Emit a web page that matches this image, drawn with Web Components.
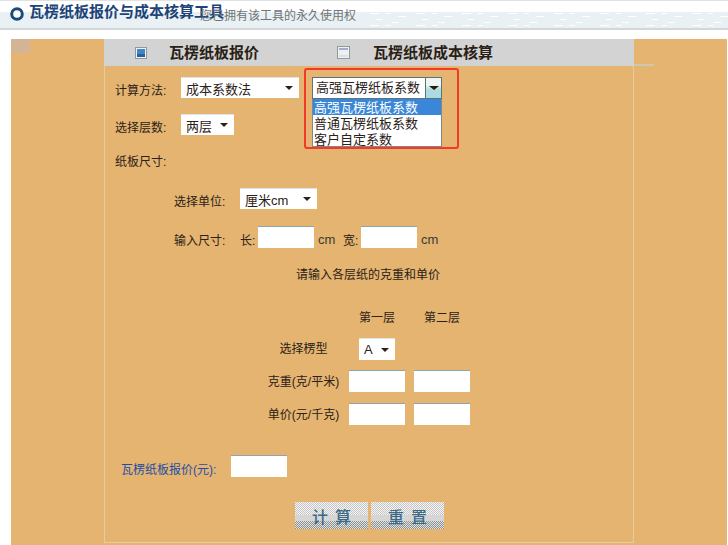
<!DOCTYPE html>
<html lang="zh">
<head>
<meta charset="utf-8">
<title>瓦楞纸板报价与成本核算工具</title>
<style>
  html, body { margin: 0; background: #fff; }
  body { font: 13px "Liberation Sans", "Noto Sans CJK SC", sans-serif; color: #2b2118; }
</style>
</head>
<body>
<tool-page>
  <tool-header slot="header" note="您已拥有该工具的永久使用权">瓦楞纸板报价与成本核算工具</tool-header>
  <quote-panel></quote-panel>
</tool-page>

<script>
customElements.define("tool-page", class extends HTMLElement {
  constructor() {
    super();
    this.attachShadow({ mode: 'open' }).innerHTML = `
      <style>
        :host { display: block; width: 728px; height: 545px; overflow: hidden; }
        .main {
          height: 506px;
          margin: 9px 1px 0 11px;
          padding-left: 93px;
          /* washed out corner and stray stripe of the old background picture */
          background:
            linear-gradient(#d3b595, #d3b595) 0 0 / 19px 14px no-repeat,
            linear-gradient(#cfc6b0, #cfc6b0) 623px 25px / 20px 2px no-repeat,
            #e4b470;
        }
      </style>
      <slot name="header"></slot>
      <div class="main"><slot></slot></div>
    `;
  }
});

customElements.define("tool-header", class extends HTMLElement {
  constructor() {
    super();
    this.attachShadow({ mode: 'open' }).innerHTML = `
      <style>
        :host {
          display: block;
          position: relative;
          box-sizing: border-box;
          height: 30px;
          border-top: 1px solid #dfe3e4;
          border-bottom: 2px solid #d3d7d9;
          background: linear-gradient(#fff 0 11px, #e9f1f4 11px);
        }
        .specks { position: absolute; left: 0; top: 11px; }
        .row { position: relative; display: flex; align-items: flex-start; padding: 6px 0 0 10px; }
        svg.dot { flex: none; }
        h1 {
          flex: none;
          width: 171px;
          margin: -5px 0 0 5px;
          font: bold 15px/20px "Liberation Serif", "Noto Sans CJK SC", serif;
          color: #1d4478;
          white-space: nowrap;
        }
        .note { margin-top: 1px; font-size: 12px; line-height: 16px; color: #6f7476; white-space: nowrap; }
      </style>
      <svg class="specks" width="728" height="16">
        <defs>
          <pattern id="dash" width="46" height="12" patternUnits="userSpaceOnUse">
            <rect x="2" y="1" width="9" height="1" fill="#fff"/>
            <rect x="18" y="1" width="5" height="1" fill="#fff"/>
            <rect x="30" y="4" width="8" height="1" fill="#fff"/>
            <rect x="8" y="7" width="6" height="1" fill="#fff"/>
            <rect x="24" y="10" width="7" height="1" fill="#fff"/>
          </pattern>
        </defs>
        <rect x="360" width="368" height="14" fill="url(#dash)"/>
      </svg>
      <div class="row">
        <svg class="dot" width="14" height="14" viewBox="0 0 14 14"><circle cx="7" cy="7" r="5.3" fill="#fff" stroke="#1c4a7c" stroke-width="3"/></svg>
        <h1><slot></slot></h1>
        <span class="note">${this.getAttribute('note')}</span>
      </div>
    `;
  }
});

customElements.define("tab-item", class extends HTMLElement {
  constructor() {
    super();
    const on = this.hasAttribute('active');
    this.attachShadow({ mode: 'open' }).innerHTML = `
      <style>
        :host { display: flex; align-items: center; gap: 22px; }
        .box {
          box-sizing: border-box;
          width: ${on ? 12 : 13}px; height: ${on ? 12 : 13}px;
          margin: 0 ${on ? 0 : 1}px 0 0;
          border: 1px solid #8d9b9c;
          box-shadow: inset 0 0 0 1px #eef2f2;
          background: ${on ? 'linear-gradient(#3f86c9 60%, #2a5f98 60%)' : 'linear-gradient(#a9a9cf 0 3px, #eef0f0 3px 8px, #dde1e1 8px)'};
        }
        .label {
          font: bold 15px/20px "Liberation Serif", "Noto Sans CJK SC", serif;
          color: #2a1f16;
          white-space: nowrap;
        }
      </style>
      <span class="box"></span>
      <span class="label"><slot></slot></span>
    `;
  }
});

customElements.define("fake-select", class extends HTMLElement {
  constructor() {
    super();
    this.attachShadow({ mode: 'open' }).innerHTML = `
      <style>
        :host {
          display: flex;
          align-items: center;
          justify-content: space-between;
          box-sizing: border-box;
          height: 21px;
          padding: 0 6px 0 5px;
          background: #fff;
          border-top: 1px solid #dfe3e4;
          white-space: nowrap;
          font-size: 13px;
          color: #2b2118;
        }
        i {
          width: 0; height: 0;
          border: 4px solid transparent;
          border-top: 4px solid #2b2118;
          border-bottom: 0;
          margin-left: 6px;
        }
      </style>
      <span><slot></slot></span><i></i>
    `;
  }
});

customElements.define("text-box", class extends HTMLElement {
  constructor() {
    super();
    this.attachShadow({ mode: 'open' }).innerHTML = `
      <style>
        :host {
          display: block;
          box-sizing: border-box;
          width: 56px; height: 22px;
          background: #fff;
          border-top: 1px solid #8fa5ab;
        }
      </style>
    `;
  }
});

customElements.define("action-button", class extends HTMLElement {
  constructor() {
    super();
    this.attachShadow({ mode: 'open' }).innerHTML = `
      <style>
        :host {
          display: flex;
          align-items: center;
          justify-content: center;
          box-sizing: border-box;
          width: 73px; height: 27px;
          padding-left: 7px;
          font: 500 16px "Noto Sans CJK SC", sans-serif;
          letter-spacing: 7px;
          color: #3c6a86;
          background: #d6d6d6;
          position: relative;
          overflow: hidden;
          isolation: isolate;
        }
        /* dithered top and bottom of the button picture */
        :host::before, :host::after {
          content: "";
          position: absolute;
          left: 0; right: 0;
          z-index: -1;
          background-size: 2px 2px;
        }
        :host::before {
          top: 0; height: 13px;
          background-image: repeating-conic-gradient(#c4c4c4 0 25%, #f6f6f6 0 50%);
        }
        :host::after {
          bottom: 0; height: 8px;
          background-image: repeating-conic-gradient(#8a9291 0 25%, #e2e2e2 0 50%);
        }
      </style>
      <slot></slot>
    `;
  }
});

// the opened dropdown with the red callout round it
customElements.define("open-select", class extends HTMLElement {
  constructor() {
    super();
    this.attachShadow({ mode: 'open' }).innerHTML = `
      <style>
        :host {
          display: block;
          position: absolute;
          left: 199px; top: 29px;
          width: 155px; height: 81px;
          box-sizing: border-box;
          padding: 7px 0 0 6px;
          border: 2px solid #f23a26;
          border-radius: 3px;
          font-size: 13px;
          line-height: 16px;
          color: #2b2118;
        }
        .closed {
          display: flex;
          box-sizing: border-box;
          width: 130px; height: 22px;
          background: #fff;
          border: 1px solid #5f7376;
        }
        .closed span { flex: 1; padding-left: 3px; line-height: 20px; white-space: nowrap; }
        .btn {
          flex: none;
          display: flex;
          justify-content: center;
          width: 16px;
          padding-top: 8px;
          box-sizing: border-box;
          border-left: 1px solid #5f7376;
          background: linear-gradient(#eef3f4 35%, #a9dbe0 60%);
        }
        .btn i {
          width: 0; height: 0;
          border: 5px solid transparent;
          border-top: 4px solid #221a12;
          border-bottom: 0;
        }
        ul {
          list-style: none;
          margin: 0; padding: 0;
          width: 130px; height: 48px;
          box-sizing: border-box;
          background: #fff;
          border: 1px solid #7d8a8c;
          border-top: 0;
        }
        li { height: 16px; line-height: 18px; padding-left: 1px; white-space: nowrap; }
        li.sel { background: #3a86d8; color: #fff; }
      </style>
      <div class="closed"><span>高强瓦楞纸板系数</span><div class="btn"><i></i></div></div>
      <ul>
        <li class="sel">高强瓦楞纸板系数</li>
        <li>普通瓦楞纸板系数</li>
        <li>客户自定系数</li>
      </ul>
    `;
  }
});

customElements.define("quote-panel", class extends HTMLElement {
  constructor() {
    super();
    this.attachShadow({ mode: 'open' }).innerHTML = `
      <style>
        :host {
          display: block;
          position: relative;
          width: 530px;
          height: 504px;
          box-sizing: border-box;
          border-left: 1px solid #e9cc9c;
          border-right: 1px solid #e9cc9c;
          border-bottom: 1px solid #e9cc9c;
          font-size: 12px;
          color: #2b2118;
        }
        .tabs {
          display: flex;
          height: 27px;
          padding-left: 31px;
          margin-left: -1px;
          margin-right: -1px;
          gap: 78px;
          background: #d3d3d3;
        }
        .form { padding-top: 11px; }
        .row { display: flex; align-items: center; white-space: nowrap; }
        .h20 { height: 20px; }
        .h21 { height: 21px; }
        .in1 { padding-left: 10px; }
        .in2 { padding-left: 69px; }
        .lab { flex: none; width: 66px; padding-top: 4px; }
        .size .unit { margin-left: 4px; width: 25px; font-size: 13px; color: #3a3a36; padding-top: 4px; }
        .size .tag { flex: none; width: 18px; padding-top: 4px; }
        .grid {
          display: grid;
          grid-template-columns: 235px 56px 56px;
          column-gap: 9px;
          align-items: center;
          margin-top: 25px;
        }
        .grid > span.name { padding-left: 160px; text-align: center; white-space: nowrap; justify-self: start; width: 77px; }
        .grid > span.head { text-align: center; height: 20px; line-height: 20px; }
        .price { color: #1f4ea8; padding-top: 4px; }
        .btns { display: flex; gap: 3px; padding-left: 190px; margin-top: 25px; }
      </style>
      <div class="tabs">
        <tab-item active>瓦楞纸板报价</tab-item>
        <tab-item>瓦楞纸板成本核算</tab-item>
      </div>
      <div class="form">
        <div class="row h21 in1">
          <span class="lab">计算方法:</span>
          <fake-select style="width:118px">成本系数法</fake-select>
        </div>
        <div class="row h21 in1" style="margin-top:16px">
          <span class="lab">选择层数:</span>
          <fake-select style="width:53px">两层</fake-select>
        </div>
        <div class="row h20 in1" style="margin-top:15px">纸板尺寸:</div>
        <div class="row h21 in2" style="margin-top:18px">
          <span class="lab">选择单位:</span>
          <fake-select style="width:77px">厘米cm</fake-select>
        </div>
        <div class="row size in2" style="margin-top:17px">
          <span class="lab">输入尺寸:</span>
          <span class="tag">长:</span>
          <text-box></text-box>
          <span class="unit">cm</span>
          <span class="tag">宽:</span>
          <text-box></text-box>
          <span class="unit">cm</span>
        </div>
        <div class="row h20" style="margin-top:15px;padding-left:191px">请输入各层纸的克重和单价</div>
        <div class="grid">
          <span></span><span class="head">第一层</span><span class="head">第二层</span>
          <span class="name" style="margin-top:6px">选择楞型</span>
          <fake-select style="width:36px;height:22px;justify-self:center;margin-top:10px">A</fake-select>
          <span></span>
          <span class="name" style="margin-top:8px">克重(克/平米)</span>
          <text-box style="margin-top:10px"></text-box>
          <text-box style="margin-top:10px"></text-box>
          <span class="name" style="margin-top:9px">单价(元/千克)</span>
          <text-box style="margin-top:11px"></text-box>
          <text-box style="margin-top:11px"></text-box>
        </div>
        <div class="row" style="margin-top:30px;padding-left:16px">
          <span class="price" style="width:110px">瓦楞纸板报价(元):</span>
          <text-box></text-box>
        </div>
        <div class="btns">
          <action-button>计算</action-button>
          <action-button>重置</action-button>
        </div>
      </div>
      <open-select></open-select>
    `;
  }
});
</script>
</body>
</html>
